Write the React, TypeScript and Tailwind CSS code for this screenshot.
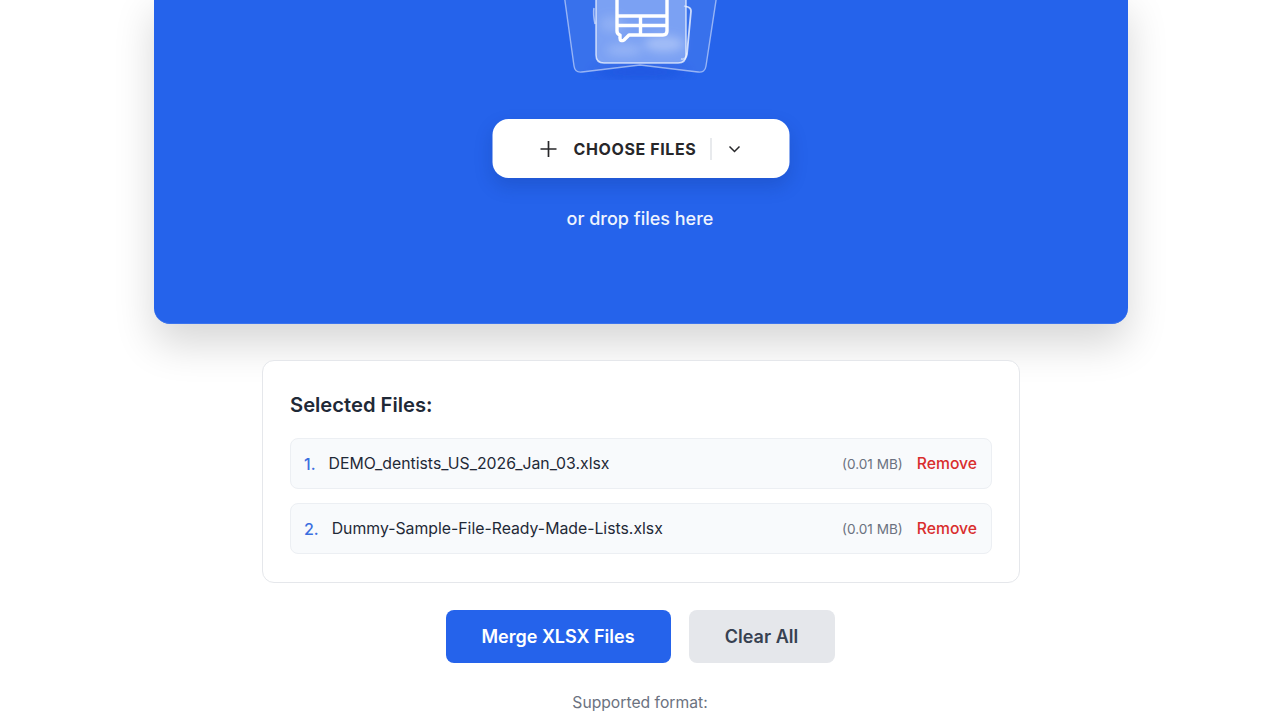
function StackIcon() {
  return (
    <svg width="160" height="80" viewBox="1 0 160 80" fill="none" className="shrink-0 blur-[0.5px]">
      <defs>
        <filter id="soft" x="-30%" y="-30%" width="160%" height="160%">
          <feGaussianBlur stdDeviation="5" />
        </filter>
        <filter id="under" x="-30%" y="-60%" width="160%" height="220%">
          <feGaussianBlur stdDeviation="6" />
        </filter>
      </defs>
      <ellipse cx="80" cy="72" rx="48" ry="5" fill="#1d4ed8" opacity="0.7" filter="url(#under)" />
      <path d="M4 -6 L14 66 Q15 73 22 72 L80 65 L138 72 Q145 73 146 66 L157 -6 Z" fill="#ffffff" fillOpacity="0.09" />
      <path d="M4 -6 L14 66 Q15 73 22 72 L80 65 L138 72 Q145 73 146 66 L157 -6" stroke="#ffffff" strokeOpacity="0.5" strokeWidth="1.4" />
      <path d="M124 6 L128 7 Q131 8 131 11 L127 54 Q126 60 121 59" stroke="#ffffff" strokeOpacity="0.75" strokeWidth="1.8" />
      <path d="M34 8 Q33 14 35 24" stroke="#ffffff" strokeOpacity="0.55" strokeWidth="1.6" />
      <path d="M36 -8 H126 V55 Q126 63 118 63 H44 Q36 63 36 55 Z" fill="#a9c2f6" fillOpacity="0.6" />
      <g filter="url(#soft)" fill="#ffffff">
        <ellipse cx="52" cy="24" rx="12" ry="8" opacity="0.16" />
        <ellipse cx="104" cy="44" rx="20" ry="8" opacity="0.3" />
        <ellipse cx="64" cy="50" rx="18" ry="6" opacity="0.2" />
      </g>
      <path d="M36 -8 V55 Q36 63 44 63 H118 Q126 63 126 55 V-8" stroke="#ffffff" strokeOpacity="0.7" strokeWidth="1.5" />
      <path
        d="M57 -4 H106 Q107 -4 107 -3 V31 Q107 35 103 35 H69 L64 40 Q60 42 60 38 V35 Q57 34 57 31 Z M57 16 H107 M57 25.5 H107 M80.5 16 V35"
        stroke="#ffffff"
        strokeWidth="3.4"
        strokeLinejoin="round"
      />
    </svg>
  )
}

function FileRow({ n, name }: { n: number; name: string }) {
  return (
    <li className="flex h-[51px] items-center justify-between rounded-lg border border-[#eceff3] bg-[#f8fafc] pt-px pr-[14px] pl-[13px]">
      <div className="flex items-center gap-[13px]">
        <span className="text-base font-medium text-[#3b6fe0]">{n}.</span>
        <span className="text-[15.8px] text-[#1f2937]">{name}</span>
      </div>
      <div className="flex items-center gap-[14px]">
        <span className="text-[13.6px] text-[#6b7280]">(0.01 MB)</span>
        <span className="text-[15.7px] font-medium text-[#d92d2d]">Remove</span>
      </div>
    </li>
  )
}

export default function App() {
  return (
    <div className="h-screen overflow-hidden bg-white font-['Inter',sans-serif]">
      <div className="ml-[154px] -mt-[8px] flex w-[974px] flex-col items-center">
        <section className="flex h-[332px] w-full flex-col items-center rounded-b-2xl border-b border-[#3b74ee] bg-[#2563eb] shadow-[0_20px_40px_rgba(0,0,0,0.16)]">
          <div className="overflow-hidden pt-[8px]">
            <StackIcon />
          </div>
          <button className="mt-[39px] flex h-[59px] w-[297px] -translate-x-[0.5px] items-center justify-center rounded-2xl bg-white shadow-[0_8px_18px_rgba(15,40,120,0.22)]">
            <svg width="20" height="20" viewBox="0 0 20 20" fill="none" stroke="#27272a" strokeWidth="1.7" className="mr-[15px]">
              <path d="M10 2v16M2 10h16" />
            </svg>
            <span className="text-base font-bold tracking-[0.6px] text-[#27272a]">CHOOSE FILES</span>
            <span className="ml-[14px] h-[22px] w-px bg-gray-300" />
            <svg width="16" height="16" viewBox="0 0 16 16" fill="none" stroke="#27272a" strokeWidth="1.5" className="ml-[15px]">
              <path d="M3 5.5 8 10.5 13 5.5" />
            </svg>
          </button>
          <p className="mt-[27px] -translate-x-px text-lg font-medium text-[#eef3fe]">or drop files here</p>
        </section>

        <section className="relative mt-[36px] w-[758px] rounded-xl border border-gray-200 bg-white px-[27px] pt-[29px] pb-[28px]">
          <h2 className="text-[20.2px] font-semibold leading-[30px] text-[#1f2937]">Selected Files:</h2>
          <ul className="mt-[18px] flex flex-col gap-[14px]">
            <FileRow n={1} name="DEMO_dentists_US_2026_Jan_03.xlsx" />
            <FileRow n={2} name="Dummy-Sample-File-Ready-Made-Lists.xlsx" />
          </ul>
        </section>

        <div className="mt-[27px] flex -translate-x-px gap-[18px]">
          <button className="h-[53px] w-[225px] rounded-lg bg-[#2563eb] pt-[1px] text-lg font-semibold text-white">Merge XLSX Files</button>
          <button className="h-[53px] w-[146px] rounded-lg bg-[#e5e7eb] pt-[1px] text-lg font-semibold text-[#374151]">Clear All</button>
        </div>

        <p className="mt-[28px] -translate-x-px text-[15.7px] text-[#6b7280]">Supported format:</p>
      </div>
    </div>
  )
}
